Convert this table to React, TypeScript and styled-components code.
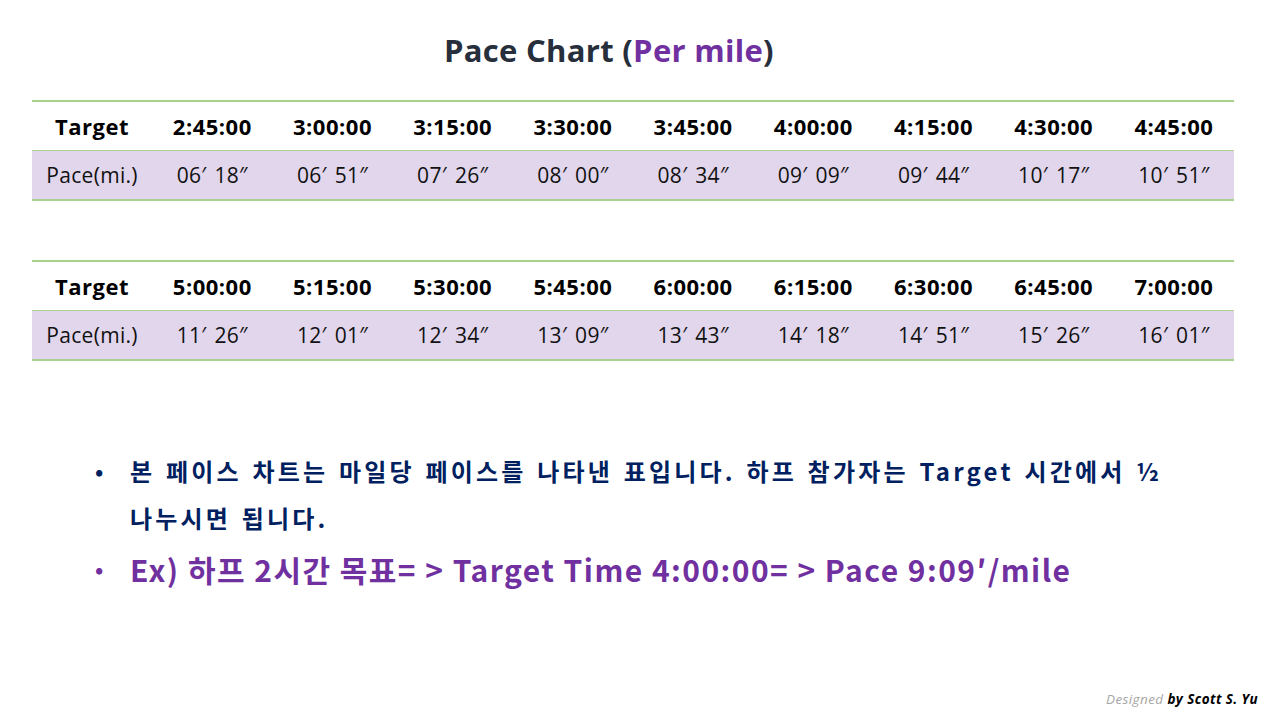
import React from "react";
import styled, { createGlobalStyle } from "styled-components";

const GlobalStyle = createGlobalStyle`
  html, body {
    margin: 0;
    padding: 0;
    background: #ffffff;
  }
  body {
    font-family: "Open Sans", "Noto Sans CJK KR", sans-serif;
  }
`;

const Slide = styled.div`
  width: 1280px;
  height: 720px;
  display: flex;
  flex-direction: column;
  box-sizing: border-box;
  padding: 28px 46px 0 32px;
  position: relative;
`;

const Title = styled.h1`
  margin: 0 48px 0 0;
  text-align: center;
  font-size: 31px;
  font-weight: 700;
  line-height: 44px;
  color: #262f3b;
  letter-spacing: 0.3px;
`;

const Accent = styled.span`
  color: #7030a0;
`;

const Table = styled.div`
  margin-top: 28px;
  width: 1202px;
  display: grid;
  grid-template-columns: repeat(10, 1fr);
  border-top: 2px solid #a9d18e;
  border-bottom: 2px solid #a9d18e;

  & + & {
    margin-top: 59px;
  }
`;

const Cell = styled.div<{ head?: boolean }>`
  height: 48px;
  display: flex;
  align-items: center;
  justify-content: center;
  font-size: ${({ head }) => (head ? "22px" : "21px")};
  letter-spacing: ${({ head }) => (head ? "0.5px" : "0.3px")};
  font-weight: ${({ head }) => (head ? 700 : 400)};
  color: ${({ head }) => (head ? "#000" : "#111")};
  background: ${({ head }) => (head ? "#ffffff" : "#e1d6ec")};
  border-bottom: ${({ head }) => (head ? "1px solid #a9d18e" : "none")};
  white-space: nowrap;
`;

const Gap = styled.span`
  display: inline-block;
  width: 8px;
`;

const Bullets = styled.ul`
  list-style: none;
  margin: 86px 0 0 0;
  padding: 0 0 0 63px;
  display: flex;
  flex-direction: column;
  gap: 4px;
`;

const Bullet = styled.li<{ big?: boolean }>`
  position: relative;
  padding-left: 35px;
  font-family: "Noto Sans CJK KR", "Open Sans", sans-serif;
  font-weight: 700;
  font-size: ${({ big }) => (big ? "30px" : "24px")};
  letter-spacing: ${({ big }) => (big ? "1.45px" : "3.2px")};
  word-spacing: ${({ big }) => (big ? "0" : "2px")};
  line-height: ${({ big }) => (big ? "48px" : "47px")};
  color: ${({ big }) => (big ? "#7030a0" : "#002060")};
  white-space: nowrap;

  &::before {
    content: "•";
    position: absolute;
    left: 0;
    top: 0;
    font-size: 22px;
    line-height: 47px;
    color: ${({ big }) => (big ? "#7030a0" : "#002060")};
  }
`;

const Footer = styled.div`
  position: absolute;
  right: 22px;
  bottom: 12px;
  font-size: 13.5px;
  font-style: italic;
  font-weight: 700;
  letter-spacing: 0.4px;
  color: #000;
`;

const Muted = styled.span`
  color: #a6a6a6;
  font-weight: 400;
`;

const rows: [string[], [string, string][]][] = [
  [
    ["2:45:00", "3:00:00", "3:15:00", "3:30:00", "3:45:00", "4:00:00", "4:15:00", "4:30:00", "4:45:00"],
    [["06", "18"], ["06", "51"], ["07", "26"], ["08", "00"], ["08", "34"], ["09", "09"], ["09", "44"], ["10", "17"], ["10", "51"]],
  ],
  [
    ["5:00:00", "5:15:00", "5:30:00", "5:45:00", "6:00:00", "6:15:00", "6:30:00", "6:45:00", "7:00:00"],
    [["11", "26"], ["12", "01"], ["12", "34"], ["13", "09"], ["13", "43"], ["14", "18"], ["14", "51"], ["15", "26"], ["16", "01"]],
  ],
];

const App: React.FC = () => {
  return (
    <>
      <GlobalStyle />
      <Slide>
        <Title>
          Pace Chart (<Accent>Per mile</Accent>)
        </Title>
        {rows.map(([targets, paces], i) => (
          <Table key={i}>
            <Cell head>Target</Cell>
            {targets.map((t) => (
              <Cell head key={t}>
                {t}
              </Cell>
            ))}
            <Cell>Pace(mi.)</Cell>
            {paces.map(([m, s]) => (
              <Cell key={m + s}>
                {m}′<Gap />
                {s}″
              </Cell>
            ))}
          </Table>
        ))}
        <Bullets>
          <Bullet>
            본 페이스 차트는 마일당 페이스를 나타낸 표입니다. 하프 참가자는 Target 시간에서 ½
            <br />
            나누시면 됩니다.
          </Bullet>
          <Bullet big>Ex) 하프 2시간 목표= &gt; Target Time 4:00:00= &gt; Pace 9:09′/mile</Bullet>
        </Bullets>
        <Footer>
          <Muted>Designed</Muted> by Scott S. Yu
        </Footer>
      </Slide>
    </>
  );
};

export default App;
